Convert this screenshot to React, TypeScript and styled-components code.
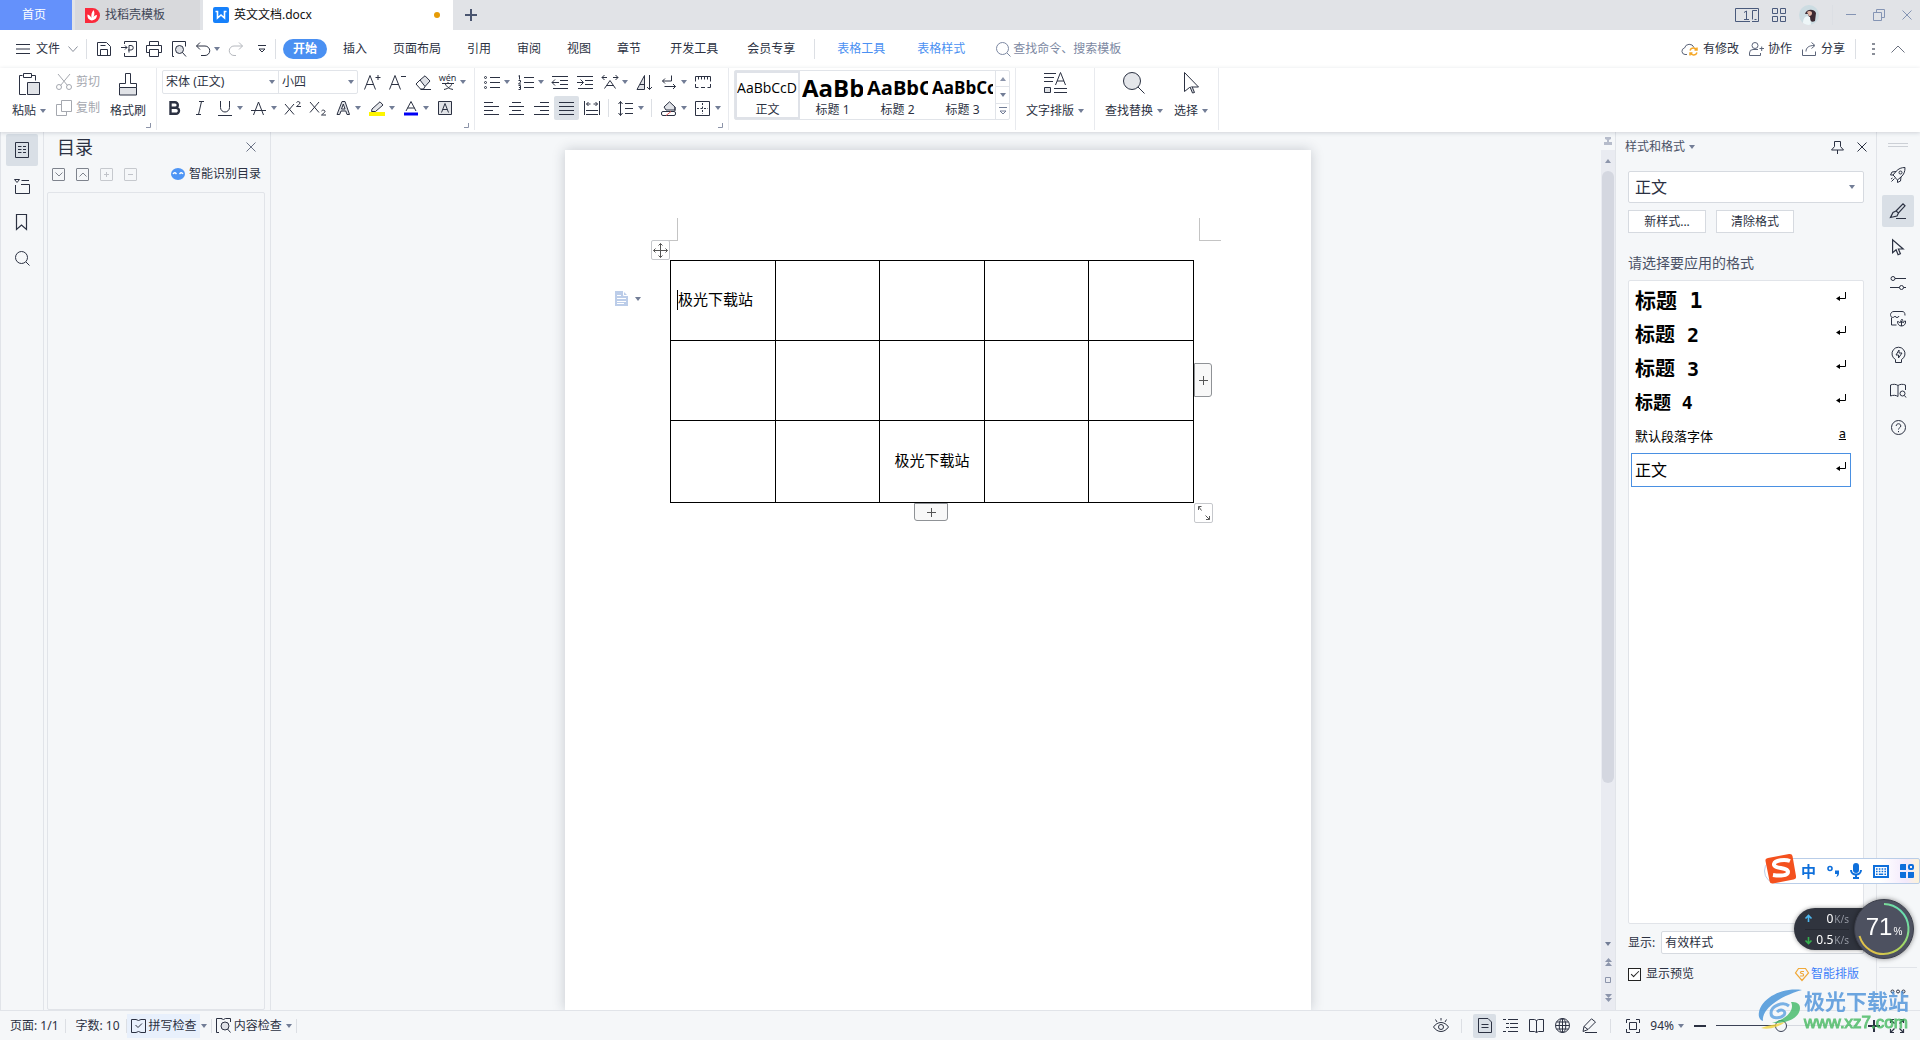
import React from "react";
import styled, { createGlobalStyle, css } from "styled-components";

const ui = `"Noto Sans", "Noto Sans CJK SC", sans-serif`;
const ink = "#2b3142";
const line = "#e1e4e9";

const Global = createGlobalStyle`
  *, *::before, *::after { box-sizing: border-box; }
  body { margin: 0; overflow: hidden; font-family: ${ui}; font-size: 12px; line-height: 16px; color: ${ink}; background: #f5f7f9; }
  button, select, input { font: inherit; color: inherit; margin: 0; }
  button { border: 0; padding: 0; background: none; cursor: pointer; white-space: nowrap; }
`;

/* ---------- icons ---------- */

const Svg = styled.svg`
  display: block;
  flex: none;
  fill: none;
  stroke: currentColor;
  overflow: visible;
`;

const glyphs: Record<string, [number, number, React.ReactNode]> = {
  menu: [14, 10, <path d="M0 .5h14M0 5h14M0 9.500h14" />],
  chevDown: [10, 6, <path d="M.5.5 5 5.500 9.500.5" stroke="#8b909c" />],
  chevUp: [14, 8, <path d="M.5 7.500 7 1l6.500 6.500" stroke="#6b7180" />],
  save: [16, 16, <path d="M1.500 1.500h9l4 4v9h-13zM4.500 14.500v-6h7v6M4.500 4.500h5" />],
  pdf: [16, 16, <><path d="M3.500 3V.5h12v15h-12V12" /><path d="M0 6.500h6M4 4.500l2 2-2 2M8 11.500V4.500h2a2 2 0 0 1 0 4.500H7" /></>],
  print: [16, 16, <path d="M3.500 4.500v-4h9v4M3.500 11.500h-3v-7h15v7h-3M3.500 8.500h9v7h-9z" />],
  preview: [16, 16, <><path d="M3 15.500H1.500V.5h13v5" /><circle cx="8.500" cy="8.500" r="4" fill="#dfe1e6" /><path d="m11.500 11.500 3.500 4" /></>],
  undo: [14, 14, <path d="M4 .5.500 4 4 7.500M.5 4H9a4.500 4.500 0 0 1 0 9.500H5" />],
  redo: [14, 14, <path d="m10 .5 3.500 3.500L10 7.500M13.500 4H5a4.500 4.500 0 0 0 0 9.500h2" stroke="#b5b8be" />],
  more: [8, 8, <path d="M0 .5h8M1 4l3 3 3-3z" />],
  search: [15, 15, <><circle cx="6.500" cy="6.500" r="6" /><path d="m11 11 3.500 3.500" /></>],
  paste: [22, 24, <><path d="M8 22.500H1.500V3.500h3M14 3.500h3.500v5M5.500 1.500h8v4h-8z" /><path d="M9.500 10.500h12v12h-12z" fill="#e1e3e7" /></>],
  cut: [16, 16, <><path d="M2 0 11.500 11.500M14 0 4.500 11.500" /><circle cx="3" cy="13" r="2.500" /><circle cx="13" cy="13" r="2.500" /></>],
  copy: [16, 16, <path d="M5.500.5h10v11h-10zM5.500 4.500h-5v11h10v-4" />],
  painter: [20, 24, <><path d="M1.500 15.500h17v7.500h-17z" fill="#e1e3e7" /><path d="M1.500 15.500v-4h6v-10h5v10h6v4" /></>],
  aPlus: [17, 16, <path d="m.5 15.500 5.500-14 5.500 14M2.500 10.500h7M11.500 3.500h5M14 1v5" />],
  aMinus: [17, 16, <path d="m.5 15.500 5.500-14 5.500 14M2.500 10.500h7M12 2.500h5" />],
  eraser: [16, 15, <><path d="M5 5 10 .800 15 6l-5 5.500z" fill="#dfe1e6" /><path d="M5 5 1 9l4.500 5h3L10 11.500M5.500 14.500H16" /></>],
  pinyin: [14, 8, <path d="M1 1.500h12M7 0v1.500M3 7.500C8 6.500 10 4 11 1.500M4 1.500C5.500 4.500 8 7 12 7.500" />],
  bold: [11, 14, <path d="M1.500 1.200h4.500a2.700 2.700 0 0 1 0 5.600H1.500zM1.500 6.800H7a3 3 0 0 1 0 6H1.500z" strokeWidth="2.400" />],
  italic: [8, 14, <path d="M3 .5h5M0 13.500h5M5.500.500l-3 13" />],
  underline: [14, 15, <path d="M2.500 0v6.500a4.500 4.500 0 0 0 9 0V0M0 14.500h14" />],
  strike: [15, 15, <path d="M2.500 14 7.500 1l5 13M0 9.500h15" />],
  sup: [17, 14, <path d="m1 3 9 10.500M10 3 1 13.500M12.500 1.500c1-1.500 3.500-1 3.500.5 0 1-2 2-3.500 3.500H17" />],
  sub: [17, 14, <path d="m1 1 9 10.500M10 1 1 11.500M12.500 10c1-1.500 3.500-1 3.500.5 0 1-2 2-3.500 3.500H17" />],
  effect: [14, 14, <><path d="M1 13.500 6 .5h3l4.500 13H11L9.800 10H5l-1.300 3.500z" fill="#dfe1e6" /><path d="m5.500 8 1.800-5L9 8z" fill="#fff" /></>],
  marker: [16, 15, <><path d="M3 8 11 .800 14 4 6.500 10.500H2.500z" fill="#e4e6ea" /><path d="M0 13h16" stroke="#fdf500" strokeWidth="4" /></>],
  fontColor: [14, 15, <><path d="m2 10 5-9.500L12 10M3.500 7h7" /><path d="M0 13h14" stroke="#0000f5" strokeWidth="3" /></>],
  boxA: [14, 14, <><path d="M.5.5h13v13H.5z" fill="#e1e3e7" /><path d="m3.500 11.500 3.500-9 3.500 9M4.700 8.500h4.600" /></>],
  bullets: [16, 15, <><path d="M6 2.500h10M6 7.500h10M6 12.500h10" /><circle cx="1.500" cy="2.500" r="1" /><circle cx="1.500" cy="7.500" r="1" /><circle cx="1.500" cy="12.500" r="1" /></>],
  numbers: [16, 15, <path d="M6 2.500h10M6 7.500h10M6 12.500h10M.5 1l1-.5V4.500M.5 5.500h2v1.500l-2 2h2.500M.5 10.500h2v4h-2M1 12.500h1.500" />],
  dedent: [16, 13, <path d="M0 .5h16M8 4.500h8M8 8.500h8M1 12.500h15M0 6.500h7M3 3.500l-3 3 3 3" />],
  indent: [16, 13, <path d="M0 .5h16M8 4.500h8M8 8.500h8M1 12.500h15M0 6.500h6M3.500 3.500l3 3-3 3" />],
  textFit: [16, 14, <path d="M2.500 13.500 8 5.500l5.500 8M4.500 10.500h7M0 2.500h5M2.500 0 0 2.500 2.500 5M11 2.500h5M13.500 0 16 2.500 13.500 5" />],
  sortA: [16, 15, <><path d="M1 14.500 8.500.500v14z" fill="#dfe1e6" /><path d="M13.500 0v14.500M11 12l2.500 2.500L16 12M4 9.500h4.500" /></>],
  wrap: [14, 14, <path d="M9.500.5v5.500H.5M3 3.500.500 6 3 8.500M2.500 11.500h11M11 9l2.500 2.500L11 14" />],
  ruler: [16, 12, <path d="M.5 5.500v-5h15v5M3.500.5v3M6.500.5v3M9.500.5v3M12.500.5v3M.5 8v3.500h3M6 11.500h4M12.500 11.500h3V8" />],
  left: [15, 13, <path d="M0 .5h9M0 4.500h15M0 8.500h9M0 12.500h15" />],
  center: [15, 13, <path d="M3 .5h9M0 4.500h15M3 8.500h9M0 12.500h15" />],
  right: [15, 13, <path d="M6 .5h9M0 4.500h15M6 8.500h9M0 12.500h15" />],
  justify: [15, 13, <path d="M0 .5h15M0 4.500h15M0 8.500h15M0 12.500h15" />],
  distribute: [16, 14, <path d="M.5 0v14M15.500 0v14M2 9.500h12M2 13.500h12M2.500 3h4M4.500 1l-2 2 2 2M9.500 3h4M11.500 1l2 2-2 2" />],
  spacing: [15, 15, <path d="M7 2.500h8M7 7.500h8M7 12.500h8M2.500.5v14M.5 3l2-2.500 2 2.500M.5 12l2 2.500 2-2.500" />],
  bucket: [16, 15, <><path d="M3 6 8.500.800 14 6v3H5z" fill="#dfe1e6" /><path d="M14 6v4" /><rect x=".5" y="10.500" width="14" height="4" rx="1.500" fill="#fff" /><path d="m5 14.500 5-4" stroke="#e15b5b" /></>],
  border: [15, 15, <><path d="M.5.5h14v14H.5z" /><path d="M7.500 2v11M2 7.500h11" strokeDasharray="2 1.500" /></>],
  textLayout: [23, 22, <><path d="M0 1.500h12M0 5.500h10M0 9.500h9M10 16.500h13M10 20.500h13M11.500 13 16.500.500l5 12.500M13 9h7" /><path d="M.5 15.500h6v5h-6z" fill="#e1e3e7" /></>],
  bigSearch: [22, 22, <><circle cx="9" cy="9" r="8.500" fill="#e4e6ea" /><path d="m15 15 6.500 6.500" /></>],
  cursor: [15, 22, <><path d="M.5.5v19l5-4 3-.5h6z" /><path d="m6 15 2.500 6 2-.5-2.500-6" fill="#d5d7dc" /></>],
  cloud: [18, 14, <><path d="M6 12.500H4a3.300 3.300 0 0 1-.5-6.500 5 5 0 0 1 9.500-.5" /><path d="M9 8.500a3.500 3.500 0 0 1 6.500-.5M16 5.500V8h-2.500M16 10.500a3.500 3.500 0 0 1-6.500.5M9 13.500V11h2.500" stroke="#f5a623" strokeWidth="1.500" /></>],
  people: [15, 14, <><circle cx="6" cy="3.500" r="3" /><path d="M9 7.500H4a3.500 3.500 0 0 0-3.500 3.500v2.500h11V11M10.500 6.500h4.500M12.700 4.500v4.500" /></>],
  share: [15, 14, <path d="M.5 7.500v6h13v-4M4 9.500c0-4 3-6 8-6M9.500.5l3.500 3-3.500 3" />],
  pages: [24, 14, <><path d="M15 13.500H.5V.5h23v13H17M22 2.500h-4.500v9" /><path d="M9 4.500 11.500 3v8M9 11.500h5M19.500 11.500h2" /></>],
  grid: [14, 14, <path d="M.5.500h5v5h-5zM8.500.500h5v5h-5zM.5 8.500h5v5h-5zM8.500 8.500h5v5h-5z" />],
  min: [10, 12, <path d="M0 5.500h10" />],
  restore: [12, 12, <path d="M.5 3.500h8v8h-8zM3.500 3.500v-3h8v8h-3" />],
  close: [10, 10, <path d="m.5.500 9 9M9.500.500l-9 9" />],
  plus: [12, 12, <path d="M0 6h12M6 0v12" strokeWidth="2" />],
  plusThin: [9, 9, <path d="M0 4.500h9M4.500 0v9" />],
  corner: [5, 5, <path d="M0 4.500h4.500V0" stroke="#8b93a8" />],
  doc: [14, 16, <path d="M.5.500h13v15H.500zM3 4.500h3.500M3 7.500h3.500M3 10.500h3.500M8 4.500h3M8 7.500h3M8 10.500h3" />],
  folder: [16, 15, <path d="M.5.500h5L3 3.500zM1.500 6v8.500h14v-9H7M7.500 1.500H15" />],
  bookmark: [12, 16, <path d="M.5.500h10v15L5.500 11l-5 4.500z" strokeWidth="1.200" />],
  pin: [13, 13, <path d="M3.500.5h6v5l3 3.500H.500l3-3.500zM6.500 9v4" />],
  rocket: [16, 16, <><path d="M5 10 3 8 6 4.500C8.500 1.500 11.500.500 15 .500c0 4-1 7-4 9.500L7.500 13l-2-2zM6 4.500 2 5 .500 8H3M11 10l-.5 4-3 1.500V13M4.500 11.500l-3 3M2.500 11l-1.500 1" /><circle cx="10.500" cy="5.500" r="1.500" /></>],
  pen: [16, 16, <path d="M6 8 13 .800l2 2L8.500 10zM6 8l-3 1.500-2.500 5L7 13l1.500-3M6 15.500h10" strokeWidth="1.200" />],
  pointer: [12, 17, <path d="M.6.800v13l3.500-3 2 5 2.300-1-2-4.800h4.800z" strokeWidth="1.200" />],
  sliders: [16, 14, <><circle cx="3" cy="2.500" r="2" /><path d="M5 2.500h11M0 11.500h9.500M13.500 11.500H16" /><circle cx="11.500" cy="11.500" r="2" /></>],
  store: [16, 16, <><path d="M1.500 6.500v7.500h5M.5 3.500C1 1.500 2 .500 4 .500h8c2 0 3 1 3 4M.5 3.500c0 3 3 4 4.500 1.500.5 2 3.500 2 4 0" /><path d="M7.500 10.500c1 0 2 .5 2.500 1.500.5-2 1.500-3.500 2-4 .5.500 1 2 1 4 .5-1.500 1.500-2 2.500-2 .5 3-1.500 5-4 5s-4-2-4-4.500zM11.500 10v5" /></>],
  bulb: [15, 16, <><path d="M4.500 12.500a6.500 6.500 0 1 1 6 0v3h-6z" /><path d="M8 3 5 8h2.500v3L11 6H8z" /></>],
  bookSearch: [16, 14, <><path d="M8 12.500c-2-1.500-5-1.500-7.500-.500V1C3 0 6 0 8 1.500 10 0 13 0 15.500 1v5M8 1.500v11" /><circle cx="12.500" cy="9.500" r="2.500" /><path d="m14.500 11.500 1.500 2" /></>],
  help: [15, 15, <><circle cx="7.500" cy="7.500" r="7" /><path d="M5.200 6c0-3 4.600-3 4.600 0 0 1.700-2.300 1.700-2.300 3.500M7.500 11v1.200" /></>],
  spell: [15, 15, <path d="M5 14.500H.500V1.500H5l2.500 1 2.500-1h4.500v13H10L7.500 13.500 5 14.500M4.500 7l2.500 2.500L11 5.500" />],
  content: [15, 15, <><path d="M3 14.500H.500V.5H5l2.500 1 2-1h5V4M4 .5h2" /><circle cx="9" cy="8" r="4" fill="#dfe1e6" /><path d="m11.500 11 3 3.500" /></>],
  eye: [16, 15, <><path d="M.5 9c4-6 11-6 15 0-4 6-11 6-15 0zM8 0v2.500M2.500 1.500 4 4M13.500 1.500 12 4" /><circle cx="8" cy="9" r="2.500" /></>],
  pageView: [14, 15, <path d="M.5.500h9.500l3.500 3.500v10.500H.500zM3.500 6.500h7M3.500 9.500h7" />],
  outline: [15, 13, <path d="M0 .5h3M5 .5h10M3 4.500h3M7 4.500h8M3 8.500h3M7 8.500h8M0 12.500h3M5 12.500h10" />],
  book: [15, 15, <path d="M7.500 2.500v12M7.500 2.500l-2-1h-5v12h5l2 1 2-1h5v-12h-5z" />],
  globe: [15, 15, <><circle cx="7.500" cy="7.500" r="7" /><ellipse cx="7.500" cy="7.500" rx="3.300" ry="7" /><path d="M.5 7.500h14M7.500.5v14M1.500 4h12M1.500 11h12" /></>],
  draw: [16, 15, <path d="M3 8.500 10.500.800 14.500 4 7 11.500l-5 2zM3 8.500 7 11.500M4 14.500h12" />],
  fit: [14, 14, <path d="M.5 4V.5H4M10 .5h3.500V4M13.500 10v3.500H10M4 13.500H.5V10M3.500 3.500h7v7h-7z" />],
  full: [14, 14, <path d="M.5 4V.5H4M10 .5h3.500V4M13.500 10v3.500H10M4 13.500H.5V10M.5.5l4 4M13.500.5l-4 4M13.500 13.500l-4-4M.5 13.500l4-4" strokeWidth="1.200" />],
  move: [15, 15, <path d="M7.500.5v14M.5 7.500h14M5.500 2.500l2-2 2 2M5.500 12.500l2 2 2-2M2.500 5.500l-2 2 2 2M12.500 5.500l2 2-2 2" />],
  resize: [12, 14, <path d="M.5 4V.5h3M.5.500l3 4M11.500 10v3.500H8M11.500 13.500l-4-4" />],
  enter: [10, 9, <><path d="M9.500 0v6.500H1" /><path d="M4 4v5L0 6.500z" fill="currentColor" stroke="none" /></>],
  down: [6, 4, <path d="M0 0h6L3 4z" fill="#727d96" stroke="none" />],
  up: [6, 4, <path d="M0 4h6L3 0z" fill="#8c95ab" stroke="none" />],
  dblUp: [7, 8, <path d="M0 4h7L3.500 0zM0 8h7L3.500 4z" fill="#8c95ab" stroke="none" />],
  dblDown: [7, 8, <path d="M0 0h7L3.500 4zM0 4h7L3.500 8z" fill="#8c95ab" stroke="none" />],
  square: [6, 6, <path d="M.5.500h5v5h-5z" stroke="#8c95ab" />],
  splitter: [8, 8, <path d="M1 0h6v2L5 3v2h3v3H0V5h3V3L1 2z" fill="#b6bccb" stroke="none" />],
  ai: [14, 12, <><ellipse cx="7" cy="6" rx="7" ry="6" fill="#4e95f5" stroke="none" /><path d="M2 6q1.500-2.500 3.500 0M8.500 6q2-2.500 3.500 0" stroke="#fff" strokeWidth="1.300" /></>],
  coin: [14, 13, <path d="M3.500.5h7l3 4.500L7 12.500.500 5zM9 3.500H6.500c-1.500 0-1.500 2 .5 2s2 2.500.5 2.500H5" stroke="#f0a93a" strokeWidth="1.200" />],
  flame: [15, 15, <><path d="M0 0h7.500a7.500 7.500 0 0 1 0 15H0z" fill="#fb2a3c" stroke="none" /><path d="M7 12.500C4 12 2 10 2.500 6.500 4.500 7 6 8.500 6.500 10 6 7 6.500 4.500 8.500 2 10 5 9.500 7 8 9.500c1-1.500 2-2.200 4-2.500 0 3-2 5-5 5.500z" fill="#fff" stroke="none" /></>],
  writer: [16, 16, <><rect width="16" height="16" rx="2" fill="#1681fb" stroke="none" /><path d="M2.500 4.500h2v6.500l3.500-3 3.500 3V4.500h2" stroke="#fff" strokeWidth="1.600" /></>],
  avatar: [20, 20, <><circle cx="10" cy="10" r="10" fill="#ccdce2" stroke="none" /><path d="M6 9c1-5 9-6 11-1l-1 8c-2 1-4 1-5-1L9 9z" fill="#3b2a33" stroke="none" /><path d="M8 7c2-2 5-1 5 1s-1 3-3 3z" fill="#e3b7a6" stroke="none" /><path d="M4 18c0-5 3-8 7-6l1 7.500c-3 1-6 0-8-1.500z" fill="#eef6f8" stroke="none" /></>],
  mic: [12, 16, <><rect x="3" y="0" width="6" height="10" rx="3" fill="#0e6fdb" stroke="none" /><path d="M1 7c0 6 10 6 10 0M6 12v4M3 15h6" stroke="#0e6fdb" strokeWidth="2" /></>],
  keyboard: [16, 13, <><path d="M1 1h14v11H1z" stroke="#0e6fdb" strokeWidth="2" /><path d="M3 4h10M3 6.500h10" stroke="#0e6fdb" strokeWidth="1.600" strokeDasharray="1.600 1.200" /><path d="M3 9.300h1.600M5.800 9.300h4.400M11.400 9.300H13" stroke="#0e6fdb" strokeWidth="1.600" /></>],
  apps: [14, 14, <><path d="M0 1q0-1 1-1h5v6H0zM0 8h6v6H1q-1 0-1-1zM8 8h6v5q0 1-1 1H8z" fill="#0e6fdb" stroke="none" /><rect x="9" y="1" width="4" height="4" rx="1" stroke="#0e6fdb" strokeWidth="2" /></>],
  punct: [12, 12, <><circle cx="3" cy="3.500" r="2" stroke="#0e6fdb" strokeWidth="1.600" /><path d="M8 5.500h4v3c0 1.500-1 3-3 3.500 1-1 1.200-2 1.200-3H8z" fill="#0e6fdb" stroke="none" /></>],
  upload: [7, 7, <path d="M3.500 7V1M.5 3.500l3-3 3 3" stroke="#4db8f0" strokeWidth="1.600" />],
  download: [7, 7, <path d="M3.500 0v6M.5 3.500l3 3 3-3" stroke="#35b14d" strokeWidth="1.600" />],
  sheet: [13, 15, <><path d="M0 0h8l5 5v10H0z" fill="#bccde9" stroke="none" /><path d="M2 4.500h4M2 7.500h9M2 10.500h9M2 12.500h7M8.500 0v4.500h4.500" stroke="#fff" /></>],
};

const Icon = ({ name, color }: { name: string; color?: string }) => {
  const [w, h, art] = glyphs[name];
  return (
    <Svg width={w} height={h} viewBox={`0 0 ${w} ${h}`} color={color} aria-hidden="true">
      {art}
    </Svg>
  );
};

/* ---------- shared ---------- */

const Shell = styled.div`
  display: flex;
  flex-direction: column;
  height: 100vh;
`;
const Row = styled.div<{ $gap?: number }>`
  display: flex;
  align-items: center;
  gap: ${(p) => p.$gap ?? 0}px;
`;
const Rule = styled.span<{ $h?: number }>`
  flex: none;
  width: 1px;
  height: ${(p) => p.$h ?? 20}px;
  background: #dcdfe4;
`;
const IconButton = styled.button<{ $color?: string }>`
  display: flex;
  align-items: center;
  gap: 4px;
  color: ${(p) => p.$color ?? ink};
`;

/* ---------- title bar ---------- */

const TitleBar = styled.header`
  display: flex;
  align-items: stretch;
  gap: 3px;
  height: 30px;
  background: #e1e3e7;
`;
const HomeTab = styled.button`
  width: 72px;
  padding-right: 4px;
  background: #6491fb;
  color: #fff;
`;
const DocTab = styled.button<{ $active?: boolean }>`
  display: flex;
  align-items: center;
  gap: 5px;
  width: ${(p) => (p.$active ? 250 : 125)}px;
  padding: 0 13px 0 10px;
  background: ${(p) => (p.$active ? "#fff" : "#d8d9dc")};
  color: ${(p) => (p.$active ? "#111" : "#3f4657")};
`;
const Unsaved = styled.i`
  width: 6px;
  height: 6px;
  margin-left: auto;
  border-radius: 50%;
  background: #e69b06;
`;
const NewTab = styled(IconButton)`
  padding: 0 9px;
  color: #4a5570;
`;
const WindowTools = styled.div`
  display: flex;
  align-items: center;
  gap: 13px;
  margin-left: auto;
  padding-right: 8px;
`;
const WindowButtons = styled.div`
  display: flex;
  align-items: center;
  gap: 17px;
`;

/* ---------- menu row ---------- */

const MenuBar = styled.nav`
  display: flex;
  align-items: center;
  height: 38px;
  padding: 0 15px 0 16px;
  background: #fff;
`;
const QuickTools = styled.div`
  display: flex;
  align-items: center;
  gap: 9px;
  margin: 0 15px 0 8px;
`;
const Tabs = styled.div`
  display: flex;
  align-items: center;
  gap: 9px;
  margin-left: 7px;
`;
const TabSet = styled.div<{ $gap: number }>`
  display: flex;
  align-items: center;
  gap: ${(p) => p.$gap}px;
`;
const MenuTab = styled.button<{ $active?: boolean; $accent?: boolean }>`
  height: 20px;
  padding: 0 10px;
  border-radius: 10px;
  color: ${(p) => (p.$accent ? "#4a90f2" : ink)};
  ${(p) => p.$active && css`background: #4a90f2; color: #fff; font-weight: 700;`}
`;
const CommandSearch = styled.label`
  display: flex;
  align-items: center;
  gap: 2px;
  margin-left: 21px;
  color: #7c88a2;
  input { width: 120px; border: 0; padding: 0; outline: 0; background: none; }
  input::placeholder { color: #7c88a2; opacity: 1; }
`;
const Account = styled.div`
  display: flex;
  align-items: center;
  gap: 10px;
  margin-left: auto;
`;
const Dots = styled.span`
  width: 3px;
  height: 12px;
  margin: 0 6px;
  background: repeating-linear-gradient(#8a8e98 0 2px, transparent 2px 5px);
`;

/* ---------- ribbon ---------- */

const Ribbon = styled.section`
  position: relative;
  z-index: 2;
  display: flex;
  height: 64px;
  background: #fff;
  box-shadow: 0 1px 4px rgba(40, 50, 70, 0.18);
`;
const Group = styled.div<{ $pad?: number }>`
  position: relative;
  display: flex;
  flex-direction: column;
  gap: 2px;
  height: 62px;
  padding: 2px ${(p) => p.$pad ?? 5}px 0;
  border-right: 1px solid #e8eaee;
`;
const Launcher = styled.button`
  position: absolute;
  right: 5px;
  bottom: 2px;
`;
const Clipboard = styled.div`
  display: flex;
  gap: 10px;
  padding: 0 10px 0 12px;
`;
const BigTool = styled.button`
  display: flex;
  flex-direction: column;
  align-items: center;
  justify-content: space-between;
  height: 49px;
  padding-top: 2px;
`;
const Caption = styled.span`
  display: flex;
  align-items: center;
  gap: 4px;
`;
const Stack = styled.div`
  display: flex;
  flex-direction: column;
  gap: 2px;
`;
const SmallTool = styled(IconButton)`
  height: 24px;
  color: #a5a8af;
`;
const ToolRow = styled.div`
  display: flex;
  align-items: center;
  height: 24px;
`;
const Tool = styled.button<{ $menu?: boolean; $on?: boolean }>`
  display: flex;
  align-items: center;
  flex: none;
  width: ${(p) => (p.$menu ? 34 : 25)}px;
  height: 24px;
  border-radius: 2px;
  background: ${(p) => (p.$on ? "#dce1e7" : "none")};
`;
const ToolFace = styled.span`
  display: flex;
  flex-direction: column;
  align-items: center;
  flex: none;
  width: 25px;
`;
const Pinyin = styled.span`
  font-size: 9px;
  line-height: 8px;
`;
const ToolRule = styled(Rule)`
  margin: 0 4px;
`;
const FontPickers = styled.div`
  display: flex;
  height: 24px;
  margin-right: 2px;
  border: 1px solid ${line};
  border-radius: 2px;
`;
const Picker = styled.label<{ $w?: number; $tall?: boolean }>`
  position: relative;
  display: flex;
  align-items: center;
  ${(p) => (p.$w ? `width: ${p.$w}px;` : "flex: 1;")}
  select {
    appearance: none;
    width: 100%;
    height: 100%;
    padding: 0 ${(p) => (p.$tall ? 6 : 3)}px;
    border: 0;
    outline: 0;
    background: transparent;
    font-size: ${(p) => (p.$tall ? 16 : 12)}px;
  }
  & + & { border-left: 1px solid ${line}; }
  svg { position: absolute; right: ${(p) => (p.$tall ? 8 : 3)}px; }
`;
const Gallery = styled.div`
  display: flex;
  height: 50px;
  border: 1px solid ${line};
  border-radius: 2px;
`;
const StyleCard = styled.button<{ $active?: boolean }>`
  display: flex;
  flex-direction: column;
  justify-content: flex-end;
  width: 65px;
  height: 48px;
  padding: 0 2px;
  overflow: hidden;
  box-shadow: ${(p) => (p.$active ? "inset 0 0 0 2px #dfe2e8" : "none")};
`;
const Sample = styled.span<{ $size: number; $bold?: boolean }>`
  align-self: stretch;
  height: 28px;
  overflow: hidden;
  color: #000;
  font-family: "Open Sans", sans-serif;
  font-size: ${(p) => p.$size}px;
  line-height: 28px;
  font-weight: ${(p) => (p.$bold ? 700 : 400)};
  text-align: left;
`;
const CardName = styled.span`
  align-self: center;
  height: 17px;
`;
const GalleryScroll = styled.div`
  display: flex;
  flex-direction: column;
  width: 14px;
  border-left: 1px solid ${line};
  button { flex: 1; display: grid; place-items: center; color: #727d96; }
  button + button { border-top: 1px solid ${line}; }
`;
const BigRow = styled.div`
  display: flex;
  gap: 11px;
`;

/* ---------- work area ---------- */

const Work = styled.main`
  display: flex;
  flex: 1;
  min-height: 0;
  background: #f5f7f9;
`;
const Rail = styled.aside<{ $right?: boolean }>`
  display: flex;
  flex-direction: column;
  align-items: center;
  gap: 4px;
  flex: none;
  width: 44px;
  padding: 2px ${(p) => (p.$right ? 1 : 0)}px 0 0;
  border: solid ${line};
  border-width: 0 ${(p) => (p.$right ? 0 : 1)}px 0 1px;
`;
const RailButton = styled.button<{ $on?: boolean }>`
  display: grid;
  place-items: center;
  width: 32px;
  height: 32px;
  border-radius: 2px;
  background: ${(p) => (p.$on ? "#d9dfe6" : "none")};
`;
const Grip = styled.span`
  width: 20px;
  height: 4px;
  margin: 9px 0 8px;
  border: solid #ccd0d6;
  border-width: 1px 0;
`;
const RailFoot = styled.div`
  display: flex;
  flex-direction: column;
  align-items: center;
  width: 38px;
  height: 43px;
  margin-top: auto;
  padding-top: 21px;
  border-top: 1px solid ${line};
`;
const Toc = styled.aside`
  display: flex;
  flex-direction: column;
  flex: none;
  width: 227px;
  padding: 0 5px 0 3px;
  border-right: 1px solid ${line};
`;
const TocHead = styled.div`
  display: flex;
  align-items: center;
  justify-content: space-between;
  height: 30px;
  padding: 0 9px 0 10px;
  h2 { margin: 0; font-size: 18px; line-height: 28px; font-weight: 400; }
`;
const TocTools = styled.div`
  display: flex;
  align-items: center;
  gap: 11px;
  height: 24px;
  margin-bottom: 6px;
  padding: 0 4px 0 5px;
`;
const LevelButton = styled.button<{ $off?: boolean }>`
  display: grid;
  place-items: center;
  width: 13px;
  height: 13px;
  border: 1px solid ${(p) => (p.$off ? "#c6c9ce" : "#7e838d")};
  border-radius: 1px;
  color: ${(p) => (p.$off ? "#c0c3c9" : "#7e838d")};
`;
const TocSmart = styled(IconButton)`
  margin-left: auto;
`;
const TocBody = styled.div`
  flex: 1;
  border: 1px solid ${line};
  border-radius: 2px;
`;
const Canvas = styled.section`
  flex: 1;
  display: flex;
  justify-content: center;
  min-width: 0;
  padding: 18px 0 0 4px;
  overflow: hidden;
`;
const Page = styled.article`
  position: relative;
  width: 746px;
  padding: 110px 117px 0 105px;
  background: #fff;
  box-shadow: 0 0 12px rgba(30, 40, 60, 0.22);
`;
const TableWrap = styled.div`
  position: relative;
`;
const Grid = styled.table`
  width: 100%;
  border-collapse: collapse;
  table-layout: fixed;
  color: #000;
  font-size: 15px;
  line-height: 20px;
  td { height: 80px; padding: 0 7px 4px; border: 1px solid #000; white-space: nowrap; }
  tr:last-child td { height: 82px; }
`;
const Cell = styled.td<{ $center?: boolean }>`
  text-align: ${(p) => (p.$center ? "center" : "left")};
`;
const Caret = styled.i`
  position: absolute;
  left: 7px;
  top: 30px;
  width: 1px;
  height: 20px;
  background: #000;
`;
const CropMark = styled.i<{ $right?: boolean }>`
  position: absolute;
  top: -42px;
  ${(p) => (p.$right ? "right: -27px; border-left" : "left: -14px; border-right")}: 1px solid #c4c4c4;
  width: 22px;
  height: 23px;
  border-bottom: 1px solid #c4c4c4;
`;
const Handle = styled.button<{ $at: "move" | "right" | "bottom" | "resize" }>`
  position: absolute;
  display: grid;
  place-items: center;
  border: 1px solid #c6c8cc;
  border-radius: 2px;
  background: #fff;
  color: #555;
  ${(p) => ({
    move: css`left: -19px; top: -20px; width: 19px; height: 20px;`,
    right: css`left: 100%; top: 103px; width: 18px; height: 34px; border-color: #8f9296; background: #f8f8f8; border-radius: 0 3px 3px 0;`,
    bottom: css`left: 244px; top: 100%; width: 34px; height: 18px; border-color: #8f9296; background: #f8f8f8; border-radius: 0 0 3px 3px;`,
    resize: css`left: 100%; top: 100%; width: 19px; height: 20px;`,
  })[p.$at]}
`;
const PasteMark = styled.button`
  position: absolute;
  left: -55px;
  top: 31px;
  display: flex;
  align-items: center;
  gap: 7px;
`;
const ScrollBar = styled.div`
  display: flex;
  flex-direction: column;
  align-items: center;
  flex: none;
  width: 14px;
  padding-bottom: 3px;
  background: #e9ebf1;
`;
const SplitBox = styled.span`
  display: grid;
  place-items: center;
  width: 14px;
  height: 18px;
  background: #f5f7f9;
`;
const ScrollArrow = styled.button<{ $h?: number }>`
  display: grid;
  place-items: center;
  width: 14px;
  height: ${(p) => p.$h ?? 18}px;
`;
const Thumb = styled.span`
  flex: 612;
  width: 12px;
  border-radius: 6px;
  background: #d4d7e0;
`;
const Track = styled.span`
  flex: 152;
`;

/* ---------- style pane ---------- */

const Pane = styled.aside`
  display: flex;
  flex-direction: column;
  flex: none;
  width: 261px;
  padding: 0 12px;
  border-left: 1px solid ${line};
`;
const PaneHead = styled.div`
  display: flex;
  align-items: center;
  gap: 13px;
  height: 30px;
  margin: 0 -3px 9px;
  > button:first-child { margin-right: auto; }
`;
const Field = styled.div<{ $h: number }>`
  display: flex;
  flex: 1 0 auto;
  height: ${(p) => p.$h}px;
  border: 1px solid #d6dae0;
  border-radius: 2px;
  background: #fff;
`;
const PaneButtons = styled.div`
  display: flex;
  gap: 10px;
  margin: 7px 0 20px;
`;
const PaneButton = styled.button`
  width: 78px;
  height: 23px;
  border: 1px solid #d6dae0;
  background: #fff;
`;
const PaneLabel = styled.h3`
  margin: 0 0 7px;
  font-size: 14px;
  line-height: 20px;
  font-weight: 400;
  color: #4b5266;
`;
const StyleList = styled.div`
  flex: 1;
  padding: 2px 12px 2px 2px;
  border: 1px solid ${line};
  border-radius: 2px;
  background: #fff;
`;
const StyleItem = styled.button<{ $size: number; $bold?: boolean; $on?: boolean }>`
  display: flex;
  align-items: center;
  justify-content: space-between;
  width: 100%;
  height: 34px;
  padding: 1px 4px 0 3px;
  border: 1px solid ${(p) => (p.$on ? "#4a90e2" : "transparent")};
  color: #000;
  font-family: "DejaVu Sans Mono", "Noto Sans CJK SC", monospace;
  font-size: ${(p) => p.$size}px;
  font-weight: ${(p) => (p.$bold ? 700 : 400)};
`;
const Mark = styled.span`
  height: 18px;
  font-size: 12px;
  line-height: 12px;
  text-decoration: underline;
`;
const ShowRow = styled.div`
  display: flex;
  align-items: center;
  gap: 6px;
  margin-top: 7px;
`;
const OptionRow = styled.div`
  display: flex;
  align-items: center;
  justify-content: space-between;
  height: 20px;
  margin: 10px 0 26px;
  padding-right: 5px;
`;
const Check = styled.label`
  display: flex;
  align-items: center;
  gap: 5px;
  input {
    appearance: none;
    width: 13px;
    height: 13px;
    border: 1px solid #222;
    background: #fff;
    display: grid;
    place-items: center;
  }
  input:checked::after {
    content: "";
    width: 4px;
    height: 8px;
    margin-bottom: 2px;
    border: solid #222;
    border-width: 0 1px 1px 0;
    transform: rotate(45deg);
  }
`;
const SmartLink = styled.a`
  display: flex;
  align-items: center;
  gap: 2px;
  color: #417ff9;
  text-decoration: none;
`;

/* ---------- status bar ---------- */

const StatusBar = styled.footer`
  display: flex;
  align-items: center;
  justify-content: space-between;
  flex: none;
  height: 30px;
  padding: 0 16px 0 0;
  border-top: 1px solid ${line};
  background: #f5f7f9;
`;
const StatusText = styled.span`
  padding: 0 6px 0 10px;
`;
const StatusButton = styled.button<{ $on?: boolean }>`
  display: flex;
  align-items: center;
  height: 24px;
  span { display: flex; align-items: center; gap: 3px; height: 24px; padding: 0 3px 0 4px; background: ${(p) => (p.$on ? "#e8f0fc" : "none")}; }
  > svg { margin: 0 4px 0 1px; }
`;
const ViewButton = styled.button<{ $on?: boolean }>`
  display: grid;
  place-items: center;
  width: 23px;
  height: 24px;
  border-radius: 2px;
  background: ${(p) => (p.$on ? "#d9dfe6" : "none")};
`;
const Views = styled.div`
  display: flex;
  align-items: center;
  gap: 3px;
  margin: 0 10px 0 11px;
`;
const Zoom = styled.div`
  display: flex;
  align-items: center;
  gap: 10px;
  margin-left: 15px;
`;
const ZoomRange = styled.input`
  appearance: none;
  width: 142px;
  height: 14px;
  background: linear-gradient(to right, #3b4256 64px, #d5d9e0 64px) center / 100% 1px no-repeat;
  &::-webkit-slider-thumb {
    appearance: none;
    width: 12px;
    height: 12px;
    border: 1px solid #3b4256;
    border-radius: 50%;
    background: #f5f7f9;
  }
`;

/* ---------- floating widgets ---------- */

const ImeBar = styled.div`
  position: fixed;
  z-index: 5;
  right: 0;
  bottom: 156px;
  display: flex;
  align-items: center;
  gap: 11px;
  height: 26px;
  padding: 0 5px 0 36px;
  border: 1px solid #b9cde8;
  border-radius: 13px 2px 2px 13px;
  background: linear-gradient(to right, #fff 75%, #f3e9fb 92%, #fdf3d6);
  color: #0e6fdb;
`;
const ImeLogo = styled.div`
  position: absolute;
  left: -1px;
  top: -6px;
`;
const ImeMode = styled.b`
  font-size: 15px;
  line-height: 20px;
`;
const Speed = styled.div`
  position: fixed;
  z-index: 6;
  right: 6px;
  bottom: 81px;
  display: flex;
  align-items: center;
  color: #fff;
`;
const Rates = styled.div`
  width: 74px;
  height: 42px;
  margin-right: -14px;
  padding: 0 19px 0 11px;
  border-radius: 21px 0 0 21px;
  background: #30343e;
  box-shadow: 0 0 4px rgba(0, 0, 0, 0.4);
`;
const Rate = styled.div`
  display: flex;
  align-items: center;
  justify-content: space-between;
  height: 21px;
  & + & { border-top: 1px solid #272a33; }
  small { margin-left: 1px; font-size: 10px; color: #9296a0; }
`;
const Gauge = styled.div`
  position: relative;
  display: grid;
  place-items: center;
  width: 60px;
  height: 60px;
  border-radius: 50%;
  background: #4d5160;
  border: 1px solid #3b3e4a;
  box-shadow: 0 0 5px rgba(0, 0, 0, 0.45);
  font-family: "Liberation Sans", sans-serif;
  font-size: 24px;
  line-height: 28px;
  > svg { position: absolute; inset: 0; }
  small { margin-left: 1px; font-size: 10px; }
`;
const Watermark = styled.div`
  position: fixed;
  z-index: 7;
  right: 11px;
  bottom: 8px;
  display: flex;
  align-items: center;
  gap: 2px;
  opacity: 0.8;
  pointer-events: none;
`;
const MarkText = styled.div`
  display: flex;
  flex-direction: column;
  color: #4a90d9;
  font-size: 21px;
  line-height: 26px;
  font-weight: 700;
  span { color: #44b85f; font-family: "Liberation Sans", sans-serif; font-size: 17px; line-height: 18px; font-weight: 400; -webkit-text-stroke: 1px #44b85f; }
`;

/* ---------- data ---------- */

type ToolDef = [name: string, label: string, menu?: boolean];
const fontTop: ToolDef[] = [["aPlus", "增大字号"], ["aMinus", "减小字号"], ["eraser", "清除格式"], ["pinyin", "拼音指南", true]];
const fontBottom: ToolDef[] = [["bold", "加粗"], ["italic", "倾斜"], ["underline", "下划线", true], ["strike", "删除线", true], ["sup", "上标"], ["sub", "下标"], ["effect", "文字效果", true], ["marker", "突出显示", true], ["fontColor", "字体颜色", true], ["boxA", "字符底纹"]];
const paraTop: ToolDef[] = [["bullets", "项目符号", true], ["numbers", "编号", true], ["dedent", "减少缩进"], ["indent", "增加缩进"], ["textFit", "中文版式", true], ["sortA", "排序"], ["wrap", "换行", true], ["ruler", "制表位"]];
const paraBottom: ToolDef[] = [["left", "左对齐"], ["center", "居中"], ["right", "右对齐"], ["justify", "两端对齐"], ["distribute", "分散对齐"], ["|", ""], ["spacing", "行距", true], ["|", ""], ["bucket", "底纹", true], ["border", "边框", true]];

const Tools = ({ items }: { items: ToolDef[] }) => (
  <>
    {items.map(([name, label, menu], i) =>
      name === "|" ? (
        <ToolRule key={i} $h={18} />
      ) : (
        <Tool key={name} aria-label={label} $menu={menu} $on={name === "justify"}>
          <ToolFace>
            {name === "pinyin" && <Pinyin>wén</Pinyin>}
            <Icon name={name} />
          </ToolFace>
          {menu && <Icon name="down" />}
        </Tool>
      )
    )}
  </>
);

const cards: [string, string, number][] = [["AaBbCcD", "正文", 14], ["AaBb", "标题 1", 24], ["AaBbC", "标题 2", 20], ["AaBbCc", "标题 3", 17]];
const styleItems: [string, number, boolean][] = [["标题 1", 21, true], ["标题 2", 20, true], ["标题 3", 20, true], ["标题 4", 18, true], ["默认段落字体", 13, false], ["正文", 16, false]];
const cellText = [["极光下载站", "", "", "", ""], ["", "", "", "", ""], ["", "", "极光下载站", "", ""]];

const Big = ({ icon, text, menu }: { icon: string; text: string; menu?: boolean }) => (
  <BigTool>
    <Icon name={icon} />
    <Caption>{text}{menu && <Icon name="down" />}</Caption>
  </BigTool>
);

export default function App() {
  return (
    <Shell>
      <Global />
      <TitleBar>
        <HomeTab>首页</HomeTab>
        <DocTab><Icon name="flame" />找稻壳模板</DocTab>
        <DocTab $active><Icon name="writer" />英文文档.docx<Unsaved /></DocTab>
        <NewTab aria-label="新建"><Icon name="plus" /></NewTab>
        <WindowTools>
          <IconButton aria-label="窗口"><Icon name="pages" color="#4a5a7c" /></IconButton>
          <IconButton aria-label="应用"><Icon name="grid" color="#4a5a7c" /></IconButton>
          <IconButton aria-label="账号"><Icon name="avatar" /></IconButton>
          <Rule />
          <WindowButtons>
            <IconButton $color="#8494b4" aria-label="最小化"><Icon name="min" /></IconButton>
            <IconButton $color="#8494b4" aria-label="还原"><Icon name="restore" /></IconButton>
            <IconButton $color="#8494b4" aria-label="关闭"><Icon name="close" /></IconButton>
          </WindowButtons>
        </WindowTools>
      </TitleBar>

      <MenuBar>
        <Row $gap={6}>
          <Icon name="menu" />
          <Row $gap={8}>文件<Icon name="chevDown" /></Row>
        </Row>
        <QuickTools>
          <Rule />
          {["save", "pdf", "print", "preview"].map((n) => <IconButton key={n} aria-label={n}><Icon name={n} /></IconButton>)}
          <IconButton aria-label="撤销"><Icon name="undo" /><Icon name="down" /></IconButton>
          <IconButton aria-label="恢复"><Icon name="redo" /></IconButton>
        </QuickTools>
        <Row $gap={9}>
          <IconButton aria-label="更多"><Icon name="more" /></IconButton>
          <Rule />
        </Row>
        <Tabs>
          <TabSet $gap={6}>
            {["开始", "插入", "页面布局", "引用", "审阅", "视图", "章节"].map((t, i) => <MenuTab key={t} $active={i === 0}>{t}</MenuTab>)}
          </TabSet>
          <MenuTab>开发工具</MenuTab>
          <MenuTab>会员专享</MenuTab>
          <TabSet $gap={12}>
            <Rule />
            <MenuTab $accent>表格工具</MenuTab>
            <MenuTab $accent>表格样式</MenuTab>
          </TabSet>
        </Tabs>
        <CommandSearch>
          <Icon name="search" />
          <input aria-label="查找命令、搜索模板" placeholder="查找命令、搜索模板" />
        </CommandSearch>
        <Account>
          <IconButton><Icon name="cloud" color="#5b6479" />有修改</IconButton>
          <IconButton><Icon name="people" color="#5b6479" />协作</IconButton>
          <IconButton><Icon name="share" color="#5b6479" />分享</IconButton>
          <Rule />
          <Dots />
          <IconButton aria-label="收起"><Icon name="chevUp" /></IconButton>
        </Account>
      </MenuBar>

      <Ribbon>
        <Group $pad={0}>
          <Clipboard>
            <Big icon="paste" text="粘贴" menu />
            <Stack>
              <SmallTool><Icon name="cut" />剪切</SmallTool>
              <SmallTool><Icon name="copy" />复制</SmallTool>
            </Stack>
            <Big icon="painter" text="格式刷" />
          </Clipboard>
          <Launcher aria-label="剪贴板设置"><Icon name="corner" /></Launcher>
        </Group>
        <Group>
          <ToolRow>
            <FontPickers>
              <Picker $w={115}><select aria-label="字体"><option>宋体 (正文)</option></select><Icon name="down" /></Picker>
              <Picker $w={79}><select aria-label="字号"><option>小四</option></select><Icon name="down" /></Picker>
            </FontPickers>
            <Tools items={fontTop} />
          </ToolRow>
          <ToolRow><Tools items={fontBottom} /></ToolRow>
          <Launcher aria-label="字体设置"><Icon name="corner" /></Launcher>
        </Group>
        <Group $pad={4}>
          <ToolRow><Tools items={paraTop} /></ToolRow>
          <ToolRow><Tools items={paraBottom} /></ToolRow>
          <Launcher aria-label="段落设置"><Icon name="corner" /></Launcher>
        </Group>
        <Group>
          <Gallery>
            {cards.map(([sample, name, size], i) => (
              <StyleCard key={name} $active={i === 0}>
                <Sample $size={size} $bold={i > 0}>{sample}</Sample>
                <CardName>{name}</CardName>
              </StyleCard>
            ))}
            <GalleryScroll>
              <button aria-label="上一行"><Icon name="up" /></button>
              <button aria-label="下一行"><Icon name="down" /></button>
              <button aria-label="展开"><Icon name="more" /></button>
            </GalleryScroll>
          </Gallery>
        </Group>
        <Group $pad={10}><Big icon="textLayout" text="文字排版" menu /></Group>
        <Group $pad={10}>
          <BigRow>
            <Big icon="bigSearch" text="查找替换" menu />
            <Big icon="cursor" text="选择" menu />
          </BigRow>
        </Group>
      </Ribbon>

      <Work>
        <Rail>
          {["doc", "folder", "bookmark", "search"].map((n, i) => <RailButton key={n} $on={i === 0} aria-label={n}><Icon name={n} /></RailButton>)}
        </Rail>
        <Toc>
          <TocHead><h2>目录</h2><IconButton $color="#6b7386" aria-label="关闭目录"><Icon name="close" /></IconButton></TocHead>
          <TocTools>
            <LevelButton aria-label="展开"><svg width="8" height="5" fill="none" stroke="currentColor"><path d="m.5.500 3.500 3.500L7.500.500" /></svg></LevelButton>
            <LevelButton aria-label="收起"><svg width="8" height="5" fill="none" stroke="currentColor"><path d="m.5 4.500 3.500-3.500 3.500 3.500" /></svg></LevelButton>
            <LevelButton $off aria-label="升级"><svg width="5" height="5" stroke="currentColor"><path d="M0 2.500h5M2.500 0v5" /></svg></LevelButton>
            <LevelButton $off aria-label="降级"><svg width="5" height="5" stroke="currentColor"><path d="M0 2.500h5" /></svg></LevelButton>
            <TocSmart><Icon name="ai" />智能识别目录</TocSmart>
          </TocTools>
          <TocBody />
        </Toc>
        <Canvas>
          <Page>
            <TableWrap>
              <Grid>
                <tbody>
                  {cellText.map((r, y) => (
                    <tr key={y}>{r.map((t, x) => <Cell key={x} $center={x === 2}>{t}</Cell>)}</tr>
                  ))}
                </tbody>
              </Grid>
              <Caret />
              <CropMark />
              <CropMark $right />
              <PasteMark aria-label="粘贴选项"><Icon name="sheet" /><Icon name="down" /></PasteMark>
              <Handle $at="move" aria-label="移动表格"><Icon name="move" /></Handle>
              <Handle $at="right" aria-label="添加列"><Icon name="plusThin" /></Handle>
              <Handle $at="bottom" aria-label="添加行"><Icon name="plusThin" /></Handle>
              <Handle $at="resize" aria-label="调整大小"><Icon name="resize" /></Handle>
            </TableWrap>
          </Page>
        </Canvas>
        <ScrollBar>
          <SplitBox><Icon name="splitter" /></SplitBox>
          <ScrollArrow $h={21} aria-label="向上滚动"><Icon name="up" /></ScrollArrow>
          <Thumb />
          <Track />
          <ScrollArrow aria-label="向下滚动"><Icon name="down" /></ScrollArrow>
          <ScrollArrow aria-label="上一页"><Icon name="dblUp" /></ScrollArrow>
          <ScrollArrow aria-label="选择浏览对象"><Icon name="square" /></ScrollArrow>
          <ScrollArrow aria-label="下一页"><Icon name="dblDown" /></ScrollArrow>
        </ScrollBar>
        <Pane>
          <PaneHead>
            <IconButton $color="#4b5266">样式和格式<Icon name="down" /></IconButton>
            <IconButton aria-label="固定"><Icon name="pin" /></IconButton>
            <IconButton aria-label="关闭"><Icon name="close" /></IconButton>
          </PaneHead>
          <Row>
            <Field $h={32}>
              <Picker $tall><select aria-label="当前样式"><option>正文</option></select><Icon name="down" /></Picker>
            </Field>
          </Row>
          <PaneButtons><PaneButton>新样式...</PaneButton><PaneButton>清除格式</PaneButton></PaneButtons>
          <PaneLabel>请选择要应用的格式</PaneLabel>
          <StyleList>
            {styleItems.map(([name, size, bold], i) => (
              <StyleItem key={name} $size={size} $bold={bold} $on={i === 5}>
                {name}
                <Mark>{i === 4 ? "a" : <Icon name="enter" />}</Mark>
              </StyleItem>
            ))}
          </StyleList>
          <ShowRow>
            <label htmlFor="show">显示:</label>
            <Field $h={23}>
              <Picker><select id="show"><option>有效样式</option></select><Icon name="down" /></Picker>
            </Field>
          </ShowRow>
          <OptionRow>
            <Check><input type="checkbox" defaultChecked />显示预览</Check>
            <SmartLink href="#layout"><Icon name="coin" />智能排版</SmartLink>
          </OptionRow>
        </Pane>
        <Rail $right>
          <Grip />
          {["rocket", "pen", "pointer", "sliders", "store", "bulb", "bookSearch", "help"].map((n, i) => (
            <RailButton key={n} $on={i === 1} aria-label={n}><Icon name={n} /></RailButton>
          ))}
          <RailFoot>
            <Svg width="16" height="5"><circle cx="2.500" cy="2.500" r="1.500" /><circle cx="8" cy="2.500" r="1.500" /><circle cx="13.500" cy="2.500" r="1.500" /></Svg>
          </RailFoot>
        </Rail>
      </Work>

      <StatusBar>
        <Row>
          <StatusText>页面: 1/1</StatusText>
          <Rule $h={14} />
          <StatusText>字数: 10</StatusText>
          <Rule $h={14} />
          <StatusButton $on><span><Icon name="spell" />拼写检查</span><Icon name="down" /></StatusButton>
          <Rule $h={14} />
          <StatusButton><span><Icon name="content" />内容检查</span><Icon name="down" /></StatusButton>
          <Rule $h={14} />
        </Row>
        <Row>
          <Row $gap={12}>
            <IconButton aria-label="护眼模式"><Icon name="eye" /></IconButton>
            <Rule $h={14} />
          </Row>
          <Views>
            {["pageView", "outline", "book", "globe", "draw"].map((n, i) => (
              <ViewButton key={n} $on={i === 0} aria-label={n}><Icon name={n} /></ViewButton>
            ))}
          </Views>
          <Rule $h={14} />
          <Zoom>
            <IconButton aria-label="适合页面"><Icon name="fit" /></IconButton>
            <IconButton>94%<Icon name="down" /></IconButton>
            <IconButton aria-label="缩小"><svg width="12" height="2"><path d="M0 1h12" stroke={ink} strokeWidth="2" /></svg></IconButton>
            <ZoomRange type="range" aria-label="缩放" min={0} max={100} defaultValue={45} />
            <IconButton aria-label="放大"><Icon name="plus" /></IconButton>
            <IconButton aria-label="全屏"><Icon name="full" /></IconButton>
          </Zoom>
        </Row>
      </StatusBar>

      <ImeBar>
        <ImeLogo>
          <Svg width="33" height="32" viewBox="0 0 33 32">
            <path d="M4 5 25 1q3-.5 3.500 2L32 23q.5 3-2.500 3.500L9 30.500q-3 .5-3.500-2.500L1.500 8Q1 5.500 4 5z" fill="#f4511e" stroke="none" />
            <path d="M26 8c-5-2-15-1-16 3-1 5 14 3 14 8 0 4-9 4-15 3" stroke="#fff" strokeWidth="4" />
          </Svg>
        </ImeLogo>
        <ImeMode>中</ImeMode>
        <Icon name="punct" />
        <Icon name="mic" />
        <Icon name="keyboard" />
        <Icon name="apps" />
      </ImeBar>

      <Speed>
        <Rates>
          <Rate><Icon name="upload" /><span>0<small>K/s</small></span></Rate>
          <Rate><Icon name="download" /><span>0.5<small>K/s</small></span></Rate>
        </Rates>
        <Gauge>
          <Svg width="58" height="58" viewBox="0 0 58 58">
            <defs>
              <linearGradient id="ring" x1="0" y1="1" x2="1" y2="0">
                <stop offset="0" stopColor="#f5b942" />
                <stop offset=".5" stopColor="#a9d65c" />
                <stop offset="1" stopColor="#4fe0d0" />
              </linearGradient>
            </defs>
            <path d="M29 4a25 25 0 1 1-24.500 32" stroke="url(#ring)" strokeWidth="2" />
          </Svg>
          <span>71<small>%</small></span>
        </Gauge>
      </Speed>

      <Watermark>
        <Svg width="44" height="42" viewBox="0 0 44 42">
          <path d="M44 1C24-2 4 9 1 23c-1 5 1 8 4 9C4 20 20 8 44 1z" fill="#3f8fd8" stroke="none" />
          <path d="M14 34c16 1 28-6 28-15 0-5-4-6-9-6 4 8-4 17-19 21z" fill="#3fb866" stroke="none" />
          <path d="M31 17c-6-5-18 0-18 7 0 6 9 6 13 2 3-4-3-7-7-3" stroke="#5b9fe0" strokeWidth="3" />
          <path d="M3 39c8 2 18-1 24-6-8 2-16 3-24 6z" fill="#f0d23c" stroke="none" />
        </Svg>
        <MarkText>极光下载站<span>www.xz7.com</span></MarkText>
      </Watermark>
    </Shell>
  );
}
